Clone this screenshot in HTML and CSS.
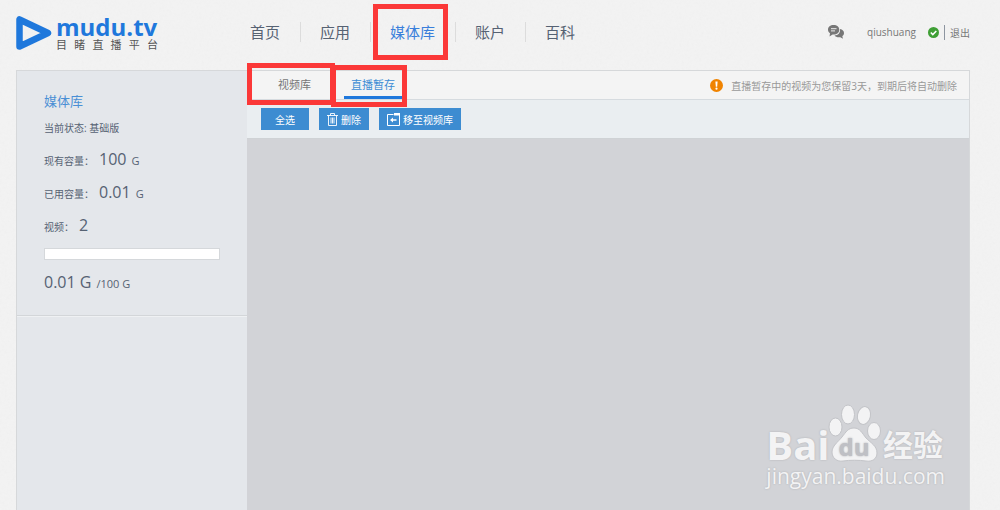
FILE: index.html
```html
<!DOCTYPE html>
<html lang="zh-CN">
<head>
    <meta charset="UTF-8">
    <meta name="viewport" content="width=device-width, initial-scale=1.0">
    <title>媒体库</title>
    <link rel="stylesheet" href="styles.css">
</head>
<body>
    <header class="header">
        <a class="logo" href="#">
            <svg class="logo-mark" viewBox="0 0 36 34">
                <path d="M3.500 3.500 V30.500 L32 17 Z" fill="none" stroke="#1f78dc" stroke-width="6.500" stroke-linejoin="round"/>
            </svg>
            <span class="logo-text">
                <strong class="logo-name">mudu.tv</strong>
                <span class="logo-sub"><span>目</span><span>睹</span><span>直</span><span>播</span><span>平</span><span>台</span></span>
            </span>
        </a>
        <nav class="nav">
            <a href="#">首页</a>
            <a href="#">应用</a>
            <a class="active" href="#">媒体库<span class="mark mark-nav"></span></a>
            <a href="#">账户</a>
            <a href="#">百科</a>
        </nav>
        <div class="user">
            <a class="messages" href="#" aria-label="消息">
                <svg width="16" height="14" viewBox="0 0 16 14">
                    <path d="M12 4 C14.500 4.500 16 6 16 8 C16 9.500 15.300 10.500 14.300 11.200 L15 13.800 L12.300 12.200 C9.500 12.600 7.500 11.800 6.500 10.500 C10 10.300 12.500 8 12 4 Z" fill="#777"/>
                    <path d="M5.600 0 C9 0 11.300 2 11.300 4.700 C11.300 7.500 9 9.500 5.600 9.500 L4.600 9.400 L1.500 11.500 L2 8.300 C0.700 7.400 0 6.200 0 4.700 C0 2 2.300 0 5.600 0 Z" fill="#777"/>
                    <path d="M3 3.700 H8.500 M3 5.900 H7" stroke="#eee" stroke-width="1"/>
                </svg>
            </a>
            <a class="user-name" href="#">qiushuang</a>
            <svg width="11" height="11" viewBox="0 0 11 11">
                <circle cx="5.500" cy="5.500" r="5.500" fill="#3f9f35"/>
                <path d="M2.800 5.500 L4.800 7.500 L8.300 4" fill="none" stroke="#fff" stroke-width="1.600"/>
            </svg>
            <a class="logout" href="#">退出</a>
        </div>
    </header>

    <div class="panel">
        <aside class="sidebar">
            <section class="usage">
                <h2>媒体库</h2>
                <p class="status">当前状态: 基础版</p>
                <p>现有容量： <b>100</b> <span class="unit">G</span></p>
                <p>已用容量： <b>0.01</b> <span class="unit">G</span></p>
                <p>视频： <b>2</b></p>
                <div class="bar"></div>
                <p class="total"><b>0.01 G</b> <span class="unit">/100 G</span></p>
            </section>
        </aside>

        <main class="main">
            <div class="tabs">
                <a class="tab" href="#">视频库<span class="mark mark-library"></span></a>
                <a class="tab active" href="#">直播暂存<span class="mark mark-live"></span></a>
                <p class="notice">
                    <svg width="13" height="13" viewBox="0 0 13 13">
                        <circle cx="6.500" cy="6.500" r="6.500" fill="#f08300"/>
                        <path d="M5.400 2.500 H7.600 L7.200 7.800 H5.800 Z" fill="#fff"/>
                        <circle cx="6.500" cy="9.700" r="1.100" fill="#fff"/>
                    </svg>
                    直播暂存中的视频为您保留3天，到期后将自动删除
                </p>
            </div>
            <div class="toolbar">
                <button type="button" class="button">全选</button>
                <button type="button" class="button">
                    <svg width="11" height="13" viewBox="0 0 11 13">
                        <path d="M0 2.500 H11 M3.500 2.500 V0.500 H7.500 V2.500 M1.500 2.500 V12.500 H9.500 V2.500 M4 4.500 V10.500 M5.500 4.500 V10.500 M7 4.500 V10.500" fill="none" stroke="#fff" stroke-width="0.900"/>
                    </svg>
                    删除
                </button>
                <button type="button" class="button">
                    <svg width="13" height="13" viewBox="0 0 13 13">
                        <path d="M6.500 1.500 H0.500 V12.500 H12.500 V1" fill="none" stroke="#fff"/>
                        <path d="M7 0 H13 V2.500 H7 Z" fill="#fff"/>
                        <path d="M3 7 L6 4.500 V6.300 H9.500 V7.700 H6 V9.500 Z" fill="#fff"/>
                    </svg>
                    移至视频库
                </button>
            </div>
            <div class="content">
                <div class="watermark">
                    <div class="watermark-top">
                        <span class="watermark-bai">Bai</span>
                        <svg class="paw" width="54" height="58" viewBox="0 0 54 58">
                            <g fill="#f3f3f4" stroke="#c3c4c8" stroke-width="1">
                                <ellipse cx="7.500" cy="23" rx="6.500" ry="9"/>
                                <ellipse cx="20" cy="10.500" rx="6.500" ry="9.500"/>
                                <ellipse cx="36" cy="11.500" rx="6.500" ry="9" transform="rotate(12 36 11.500)"/>
                                <ellipse cx="46" cy="27" rx="6.500" ry="8.500"/>
                                <path d="M26 24 C32 24 34 29 38 34 C43 39 49 42 49 49 C49 55 44 58 38 57 C31 56 22 56 15 57 C9 58 4 54 4 48 C4 42 10 38 14 33 C18 28 20 24 26 24 Z"/>
                            </g>
                            <text class="paw-text" x="26" y="52" text-anchor="middle">du</text>
                        </svg>
                        <span class="watermark-jingyan">经验</span>
                    </div>
                    <div class="watermark-url">jingyan.baidu.com</div>
                </div>
            </div>
        </main>
    </div>
</body>
</html>
```
FILE: styles.css
```css
* {
    box-sizing: border-box;
}
body {
    display: flex;
    flex-direction: column;
    min-height: 100vh;
    margin: 0;
    padding: 0 30px 0 16px;
    background-color: #f3f3f3;
    background-image: url("data:image/svg+xml,%3Csvg xmlns='http://www.w3.org/2000/svg' width='120' height='120'%3E%3Cfilter id='n'%3E%3CfeTurbulence type='fractalNoise' baseFrequency='.4' numOctaves='2' stitchTiles='stitch'/%3E%3CfeColorMatrix type='saturate' values='0'/%3E%3C/filter%3E%3Crect width='120' height='120' filter='url(%23n)' opacity='.04'/%3E%3C/svg%3E");
    font-family: "Open Sans", "Noto Sans CJK SC", sans-serif;
    font-size: 10px;
    color: #566273;
}
a {
    color: inherit;
    text-decoration: none;
}
p, h2 {
    margin: 0;
    font-weight: normal;
}
svg {
    flex: none;
}

.header {
    display: flex;
    align-items: center;
    height: 70px;
    padding-bottom: 6px;
}
.logo {
    display: flex;
    align-items: center;
    gap: 4px;
    width: 215px;
    padding-top: 2px;
}
.logo-mark {
    width: 36px;
    height: 34px;
}
.logo-text {
    display: flex;
    flex-direction: column;
    width: 102px;
}
.logo-name {
    font-size: 24px;
    line-height: 24px;
    color: #1f78dc;
}
.logo-sub {
    display: flex;
    justify-content: space-between;
    font-size: 11px;
    line-height: 12px;
    color: #555;
}
.nav {
    display: flex;
    font-size: 15px;
    line-height: 20px;
}
.nav a {
    position: relative;
    padding: 0 20px 0 19px;
    border-right: 1px solid #dcdcdc;
}
.nav a:last-child {
    border-right: none;
}
.nav .active {
    color: #3a7fdb;
}
.user {
    display: flex;
    align-items: center;
    margin-left: auto;
    color: #777;
}
.messages {
    display: flex;
    margin-right: 23px;
}
.user-name {
    margin-right: 12px;
}
.logout {
    margin-left: 5px;
    padding-left: 5px;
    border-left: 1px solid #8d95a0;
}

.panel {
    display: flex;
    flex: 1;
    border: 1px solid #d6d8da;
    border-bottom: none;
}
.sidebar {
    width: 230px;
    background-color: #e4e7eb;
}
.usage {
    padding: 19px 27px 15px;
    border-bottom: 1px solid #d3d6d9;
    box-shadow: 0 1px 0 #eff1f3;
}
.usage h2 {
    font-size: 13px;
    line-height: 22px;
    color: #4a8fd5;
}
.usage p {
    display: flex;
    align-items: baseline;
    gap: 5px;
    height: 33px;
    line-height: 30px;
}
.usage .status {
    height: 32px;
    line-height: 32px;
}
.usage b {
    font-size: 16px;
    font-weight: normal;
}
.unit {
    font-size: 11px;
}
.bar {
    height: 12px;
    margin: 5px 0 7px;
    border: 1px solid #d5d8db;
    background-color: #fff;
}

.main {
    display: flex;
    flex: 1;
    flex-direction: column;
}
.tabs {
    display: flex;
    height: 29px;
    padding: 0 12px 0 24px;
    border-bottom: 1px solid #d6dbdf;
    background-color: #f4f4f4;
}
.tab {
    position: relative;
    margin-right: 26px;
    padding: 0 7px;
    font-size: 11px;
    line-height: 28px;
    color: #777;
}
.tab.active {
    border-bottom: 3px solid #1f78dc;
    color: #3d8cd4;
}
.notice {
    display: flex;
    align-items: center;
    gap: 8px;
    margin-left: auto;
    color: #999;
}
.toolbar {
    display: flex;
    align-items: center;
    gap: 10px;
    height: 39px;
    padding: 0 14px;
    border-bottom: 1px solid #cfd2d5;
    background-color: #eaeef1;
}
.button {
    display: flex;
    align-items: center;
    justify-content: center;
    gap: 3px;
    min-width: 48px;
    height: 22px;
    padding: 0 8px;
    border: none;
    background-color: #3d8cd1;
    font-family: inherit;
    font-size: 10px;
    color: #fff;
    cursor: pointer;
}
.button:hover {
    background-color: #2f7cc0;
}
.content {
    position: relative;
    flex: 1;
    background-color: #d2d3d7;
}

/* red highlight frames */
.mark {
    position: absolute;
    border: 5px solid #fb3838;
    pointer-events: none;
}
.mark-nav {
    top: -18px;
    right: 7px;
    bottom: -18px;
    left: 2px;
}
.mark-library {
    top: -8px;
    right: -17px;
    bottom: -6px;
    left: -24px;
}
.mark-live {
    top: -6px;
    right: -5px;
    bottom: -11px;
    left: -13px;
}

.watermark {
    position: absolute;
    right: 24px;
    bottom: 20px;
    color: #f3f3f4;
    text-shadow: 0 0 2px #aaabaf;
}
.watermark-top {
    display: flex;
    align-items: flex-end;
    height: 58px;
    padding-right: 2px;
}
.watermark-bai {
    font-size: 40px;
    font-weight: bold;
    line-height: 34px;
}
.watermark-jingyan {
    margin-left: auto;
    font-size: 30px;
    font-weight: bold;
    line-height: 34px;
}
.paw {
    margin-left: -2px;
}
.paw-text {
    font-size: 24px;
    font-weight: bold;
    fill: #bfc0c5;
}
.watermark-url {
    font-size: 21px;
    line-height: 28px;
}
```
